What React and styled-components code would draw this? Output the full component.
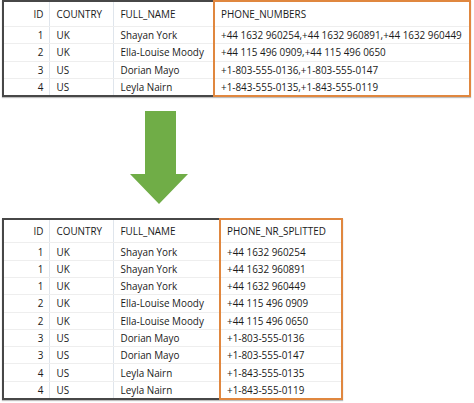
import React from 'react';
import styled, { createGlobalStyle } from 'styled-components';

const GlobalStyle = createGlobalStyle`
  html, body {
    margin: 0;
    padding: 0;
    background: #ffffff;
  }
  body {
    font-family: "Open Sans", "Liberation Sans", sans-serif;
  }
`;

const Page = styled.div`
  width: 474px;
  height: 403px;
  padding: 0 0 0 2px;
  box-sizing: border-box;
  overflow: hidden;
`;

const Table = styled.table`
  border-collapse: collapse;
  table-layout: fixed;
  width: ${(p) => p.$width}px;
  border: 2px solid #474747;
  box-shadow: 0 1px 1px rgba(0, 0, 0, 0.25);
  font-size: 9.9px;
  color: #1a1a1a;
`;

const Row = styled.tr`
  height: ${(p) => p.$h}px;
`;

const Cell = styled.td`
  padding: 0 0 0 7px;
  white-space: nowrap;
  overflow: hidden;
  text-align: left;
  vertical-align: middle;
  font-weight: 400;
  border-left: 1px solid #dfe5ec;
  border-right: 1px solid #dfe5ec;
  border-top: 1px solid #eeeeee;
  border-bottom: 1px solid #eeeeee;
  line-height: 10px;

  &.num {
    text-align: right;
    padding: 0 5px 0 0;
  }

  &.hl {
    padding-left: 6px;
    border-left: 2px solid #e0873f;
    border-right: 2px solid #e0873f;
  }
  &.hl.first {
    border-top: 2px solid #e0873f;
  }
  &.hl.last {
    border-bottom: 2px solid #e0873f;
  }
`;

const ArrowWrap = styled.div`
  margin: 14px 0 14px 128px;
  width: 58px;
  height: 93px;
  svg {
    display: block;
  }
`;

const topRows = [
  ['1', 'UK', 'Shayan York', '+44 1632 960254,+44 1632 960891,+44 1632 960449'],
  ['2', 'UK', 'Ella-Louise Moody', '+44 115 496 0909,+44 115 496 0650'],
  ['3', 'US', 'Dorian Mayo', '+1-803-555-0136,+1-803-555-0147'],
  ['4', 'US', 'Leyla Nairn', '+1-843-555-0135,+1-843-555-0119'],
];

const bottomRows = [
  ['1', 'UK', 'Shayan York', '+44 1632 960254'],
  ['1', 'UK', 'Shayan York', '+44 1632 960891'],
  ['1', 'UK', 'Shayan York', '+44 1632 960449'],
  ['2', 'UK', 'Ella-Louise Moody', '+44 115 496 0909'],
  ['2', 'UK', 'Ella-Louise Moody', '+44 115 496 0650'],
  ['3', 'US', 'Dorian Mayo', '+1-803-555-0136'],
  ['3', 'US', 'Dorian Mayo', '+1-803-555-0147'],
  ['4', 'US', 'Leyla Nairn', '+1-843-555-0135'],
  ['4', 'US', 'Leyla Nairn', '+1-843-555-0119'],
];

const DataTable = ({ widths, header, rows, headH, rowH }) => {
  const total = widths.reduce((a, b) => a + b, 0);
  return (
    <Table $width={total}>
      <colgroup>
        {widths.map((w, i) => (
          <col key={i} style={{ width: w }} />
        ))}
      </colgroup>
      <thead>
        <Row $h={headH}>
          {header.map((h, i) => (
            <Cell as="th" key={h} className={i === 0 ? 'num' : i === 3 ? 'hl first' : ''}>
              {h}
            </Cell>
          ))}
        </Row>
      </thead>
      <tbody>
        {rows.map((r, ri) => (
          <Row key={ri} $h={rowH}>
            {r.map((v, i) => (
              <Cell
                key={i}
                className={
                  i === 0 ? 'num' : i === 3 ? (ri === rows.length - 1 ? 'hl last' : 'hl') : ''
                }
              >
                {v}
              </Cell>
            ))}
          </Row>
        ))}
      </tbody>
    </Table>
  );
};

const DownArrow = () => (
  <svg width="58" height="93" viewBox="0 0 58 93">
    <polygon points="15,0 46,0 46,63 58,63 29,93 0,63 15,63" fill="#70ad47" />
  </svg>
);

export default function App() {
  return (
    <Page>
      <GlobalStyle />
      <DataTable
        widths={[46, 64, 101, 256]}
        header={['ID', 'COUNTRY', 'FULL_NAME', 'PHONE_NUMBERS']}
        rows={topRows}
        headH={25}
        rowH={17.6}
      />
      <ArrowWrap>
        <DownArrow />
      </ArrowWrap>
      <DataTable
        widths={[46, 64, 107, 122]}
        header={['ID', 'COUNTRY', 'FULL_NAME', 'PHONE_NR_SPLITTED']}
        rows={bottomRows}
        headH={23.5}
        rowH={17.3}
      />
    </Page>
  );
}
